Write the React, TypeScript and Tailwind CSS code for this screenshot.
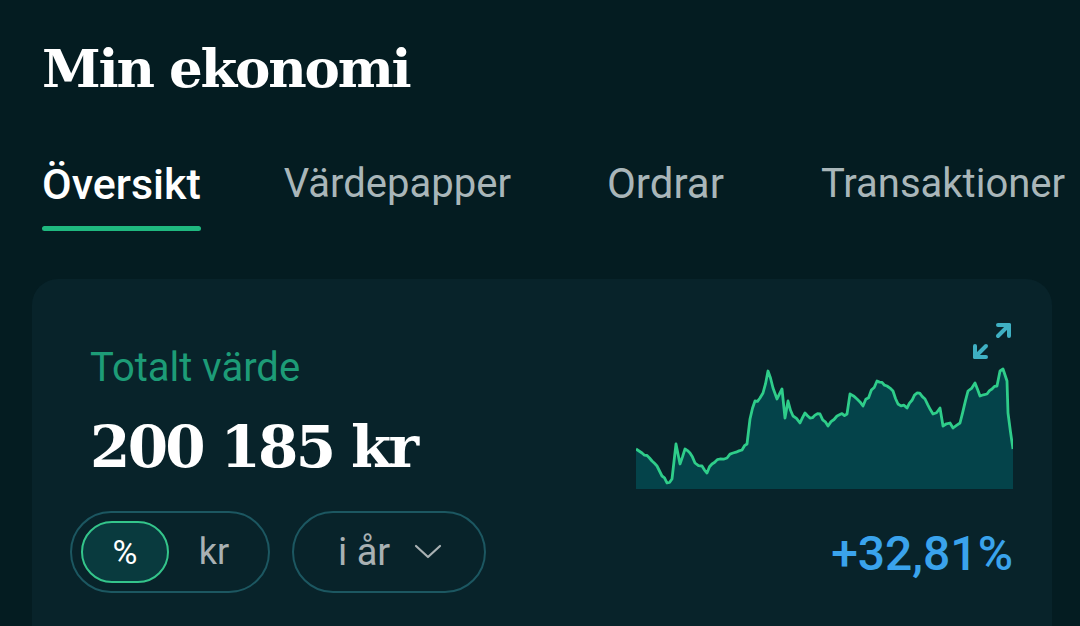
import React from "react";

const raw: [number, number][] = [
  [636, 448], [642, 452], [652, 460], [657, 465], [662, 475], [667, 482], [672, 478], [676, 443],
  [680, 463], [685, 448], [690, 452], [695, 462], [702, 465], [707, 472], [712, 463], [720, 458],
  [727, 457], [733, 452], [742, 449], [747, 443], [750, 418], [755, 400], [760, 397], [763, 392],
  [768, 370], [773, 387], [777, 398], [782, 388], [785, 417], [788, 400], [793, 415], [800, 422],
  [805, 412], [810, 417], [820, 413], [828, 425], [837, 415], [847, 413], [850, 393], [857, 398],
  [863, 405], [877, 380], [887, 385], [893, 390], [898, 403], [907, 407], [917, 392], [925, 398],
  [933, 413], [940, 407], [943, 425], [950, 422], [953, 427], [960, 422], [968, 390], [975, 382],
  [980, 395], [987, 393], [992, 388], [997, 385], [1000, 370], [1003, 368], [1007, 380], [1008, 412],
  [1013, 448],
];

function buildPoints(): [number, number][] {
  const out: [number, number][] = [];
  let seed = 7;
  const rnd = () => {
    seed = (seed * 9301 + 49297) % 233280;
    return seed / 233280;
  };
  for (let i = 0; i < raw.length - 1; i++) {
    const [x0, y0] = raw[i];
    const [x1, y1] = raw[i + 1];
    out.push([x0 - 636, y0 - 360]);
    const steps = Math.max(0, Math.floor((x1 - x0) / 2.5) - 1);
    for (let s = 1; s <= steps; s++) {
      const t = s / (steps + 1);
      out.push([x0 + (x1 - x0) * t - 636, y0 + (y1 - y0) * t - 360 + (rnd() - 0.5) * 4]);
    }
  }
  const last = raw[raw.length - 1];
  out.push([last[0] - 636, last[1] - 360]);
  return out;
}

const pts = buildPoints();
const line = pts.map((p, i) => `${i === 0 ? "M" : "L"}${p[0].toFixed(1)} ${p[1].toFixed(1)}`).join(" ");
const area = `${line} L377 128 L0 128 Z`;

const slab = { fontFamily: '"Roboto Slab", "DejaVu Serif", serif' };
const sans = { fontFamily: 'Roboto, "Noto Sans", sans-serif' };

export default function App() {
  return (
    <div className="w-[1080px] h-[626px] overflow-hidden bg-[#041c21]" style={sans}>
      <div className="pl-[42px] pt-[36px]">
        <h1 className="text-[53px] leading-[64px] font-bold text-white tracking-[-2.2px] whitespace-nowrap" style={slab}>
          Min ekonomi
        </h1>
      </div>

      <div className="flex pl-[42px] mt-[60px] whitespace-nowrap">
        <div className="flex flex-col">
          <span className="text-[43px] leading-[48px] font-medium text-white">Översikt</span>
          <div className="mt-[18px] h-[5px] rounded-full bg-[#1fb87f]" />
        </div>
        <span className="ml-[83px] text-[40px] leading-[48px] text-[#a9b6b9]">Värdepapper</span>
        <span className="ml-[96px] text-[42px] leading-[48px] text-[#a9b6b9]">Ordrar</span>
        <span className="ml-[97px] text-[40px] leading-[48px] text-[#a9b6b9]">Transaktioner</span>
      </div>

      <div className="ml-[32px] mt-[48px] w-[1020px] h-[380px] rounded-[26px] bg-[#08232a] flex justify-between pl-[58px] pr-[39px]">
        <div className="flex flex-col pt-[65px]">
          <span className="text-[40px] leading-[48px] text-[#1d9c77]">Totalt värde</span>
          <span className="mt-[21px] text-[58px] leading-[68px] font-bold text-white tracking-[-2.7px] whitespace-nowrap" style={slab}>
            200 185 kr
          </span>
          <div className="flex items-center mt-[30px] -ml-[20px] gap-[22px]">
            <div className="flex items-center h-[82px] rounded-full border-2 border-[#1c5761] px-[9px]">
              <div className="w-[88px] h-[62px] rounded-full border-2 border-[#34c58b] bg-[#093a3e] flex items-center justify-center text-[34px] text-white">
                %
              </div>
              <div className="w-[90px] h-[62px] flex items-center justify-center text-[36px] text-[#a9b1b3]">
                kr
              </div>
            </div>
            <div className="flex items-center h-[82px] rounded-full border-2 border-[#1c5761] pl-[44px] pr-[42px] gap-[24px]">
              <span className="text-[38px] text-[#a9b1b3]">i år</span>
              <svg width="28" height="16" viewBox="0 0 28 16" fill="none">
                <path d="M2 2 L14 13 L26 2" stroke="#a9b1b3" strokeWidth="2.2" strokeLinecap="round" strokeLinejoin="round" />
              </svg>
            </div>
          </div>
        </div>

        <div className="flex flex-col items-end w-[377px] pt-[43px]">
          <svg width="40" height="38" viewBox="0 0 40 38" fill="none" className="mr-[1px]">
            <g stroke="#3fb0c3" strokeWidth="4" strokeLinecap="round" strokeLinejoin="round">
              <path d="M26 3 L37 3 L37 14" />
              <path d="M37 3 L26 14" />
              <path d="M3 24 L3 35 L14 35" />
              <path d="M3 35 L14 24" />
            </g>
          </svg>
          <svg width="377" height="128" viewBox="0 0 377 128" className="mt-[1px]">
            <path d={area} fill="#04434a" />
            <path d={line} fill="none" stroke="#2fcd8a" strokeWidth="2.8" strokeLinejoin="round" />
          </svg>
          <span className="mt-[37px] text-[48px] leading-[56px] font-medium text-[#3aa3ec]">+32,81%</span>
        </div>
      </div>
    </div>
  );
}
